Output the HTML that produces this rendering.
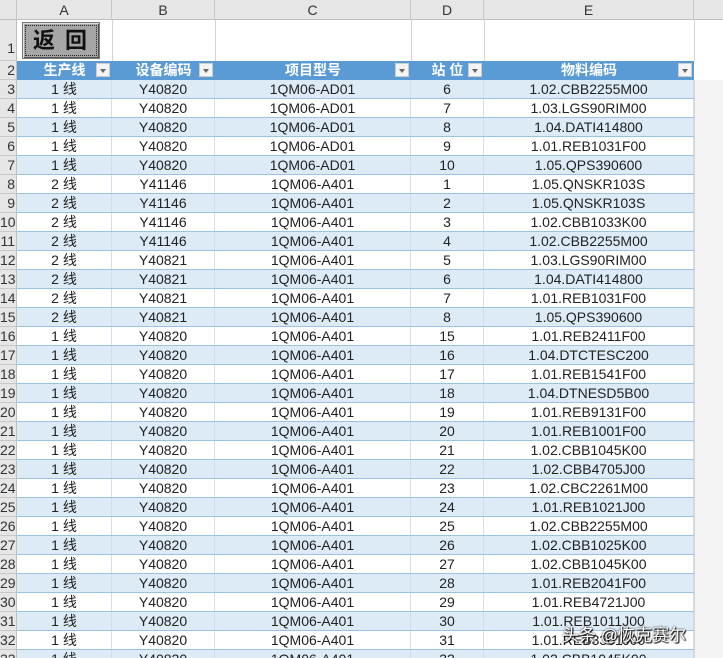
<!DOCTYPE html>
<html><head><meta charset="utf-8"><style>
*{margin:0;padding:0;box-sizing:border-box}
html,body{width:723px;height:658px;overflow:hidden}
body{background:#fff;font-family:"Liberation Sans","Noto Sans CJK SC",sans-serif;position:relative;color:#222}
.ch{position:absolute;top:0;height:20px;background:#e6e6e6;border-right:1px solid #c8c8c8;border-bottom:1px solid #bfbfbf;text-align:center;font-size:14px;line-height:20px;color:#333}
.rh{position:absolute;left:0;width:17px;background:#e6e6e6;border-bottom:1px solid #c8c8c8;border-right:1px solid #bfbfbf;text-align:right;font-size:14px;color:#333;overflow:hidden;white-space:nowrap;padding-right:1px}
.r{position:absolute;left:17px;width:677px;height:19px;display:flex;font-size:14px;line-height:19px;border-bottom:1px solid #9bc2e6}
.r.b{background:#ddebf7}
.r div{text-align:center;border-right:1px solid #d4dde8;white-space:nowrap;overflow:hidden}
.a{width:95px}.bb{width:103px}.c{width:196px}.d{width:73px}.e{width:210px}
.h{position:absolute;left:17px;top:61px;width:677px;height:19px;background:#5b9bd5;display:flex;color:#fff;font-weight:bold;font-size:14px;line-height:19px}
.h div{position:relative;text-align:center}
.dd{position:absolute;right:2px;top:2px;width:14px;height:14px;background:#f4f4f4;border:1px solid #ccc}
.dd:after{content:"";position:absolute;left:3px;top:5px;border-left:3px solid transparent;border-right:3px solid transparent;border-top:4px solid #666}
</style></head><body>
<div class="ch" style="left:0;width:17px"></div>
<div class="ch" style="left:17px;width:95px">A</div>
<div class="ch" style="left:112px;width:103px">B</div>
<div class="ch" style="left:215px;width:196px">C</div>
<div class="ch" style="left:411px;width:73px">D</div>
<div class="ch" style="left:484px;width:210px">E</div>
<div class="ch" style="left:694px;width:29px;border-right:none"></div>
<div style="position:absolute;left:112px;top:20px;width:1px;height:41px;background:#d4d4d4"></div>
<div style="position:absolute;left:215px;top:20px;width:1px;height:41px;background:#d4d4d4"></div>
<div style="position:absolute;left:411px;top:20px;width:1px;height:41px;background:#d4d4d4"></div>
<div style="position:absolute;left:484px;top:20px;width:1px;height:41px;background:#d4d4d4"></div>
<div style="position:absolute;left:694px;top:20px;width:1px;height:41px;background:#d4d4d4"></div>
<div style="position:absolute;left:694px;top:80px;width:29px;height:578px;background:#f4f4f4;border-left:1px solid #d4d4d4"></div>
<div class="rh" style="top:20px;height:41px;line-height:56px">1</div>
<div class="rh" style="top:61px;height:19px;line-height:19px">2</div>
<div style="position:absolute;left:22px;top:22px;width:78px;height:37px;background:#a6a6a6;border:1px solid #777;box-shadow:inset 1px 1px 0 #e0e0e0,inset -1px -1px 0 #555">
<div style="position:absolute;left:2px;top:2px;right:2px;bottom:2px;border:1px dotted #222;font-size:22px;font-weight:bold;text-align:center;line-height:30px;color:#111;white-space:nowrap;letter-spacing:2px">返 回</div></div>
<div class="h"><div class="a">生产线<span class="dd"></span></div><div class="bb">设备编码<span class="dd"></span></div><div class="c">项目型号<span class="dd"></span></div><div class="d">站 位<span class="dd"></span></div><div class="e">物料编码<span class="dd"></span></div></div>

<div class="rh" style="top:80px;height:19px;line-height:19px">3</div><div class="r b" style="top:80px"><div class="a">1 线</div><div class="bb">Y40820</div><div class="c">1QM06-AD01</div><div class="d">6</div><div class="e">1.02.CBB2255M00</div></div>
<div class="rh" style="top:99px;height:19px;line-height:19px">4</div><div class="r" style="top:99px"><div class="a">1 线</div><div class="bb">Y40820</div><div class="c">1QM06-AD01</div><div class="d">7</div><div class="e">1.03.LGS90RIM00</div></div>
<div class="rh" style="top:118px;height:19px;line-height:19px">5</div><div class="r b" style="top:118px"><div class="a">1 线</div><div class="bb">Y40820</div><div class="c">1QM06-AD01</div><div class="d">8</div><div class="e">1.04.DATI414800</div></div>
<div class="rh" style="top:137px;height:19px;line-height:19px">6</div><div class="r" style="top:137px"><div class="a">1 线</div><div class="bb">Y40820</div><div class="c">1QM06-AD01</div><div class="d">9</div><div class="e">1.01.REB1031F00</div></div>
<div class="rh" style="top:156px;height:19px;line-height:19px">7</div><div class="r b" style="top:156px"><div class="a">1 线</div><div class="bb">Y40820</div><div class="c">1QM06-AD01</div><div class="d">10</div><div class="e">1.05.QPS390600</div></div>
<div class="rh" style="top:175px;height:19px;line-height:19px">8</div><div class="r" style="top:175px"><div class="a">2 线</div><div class="bb">Y41146</div><div class="c">1QM06-A401</div><div class="d">1</div><div class="e">1.05.QNSKR103S</div></div>
<div class="rh" style="top:194px;height:19px;line-height:19px">9</div><div class="r b" style="top:194px"><div class="a">2 线</div><div class="bb">Y41146</div><div class="c">1QM06-A401</div><div class="d">2</div><div class="e">1.05.QNSKR103S</div></div>
<div class="rh" style="top:213px;height:19px;line-height:19px">10</div><div class="r" style="top:213px"><div class="a">2 线</div><div class="bb">Y41146</div><div class="c">1QM06-A401</div><div class="d">3</div><div class="e">1.02.CBB1033K00</div></div>
<div class="rh" style="top:232px;height:19px;line-height:19px">11</div><div class="r b" style="top:232px"><div class="a">2 线</div><div class="bb">Y41146</div><div class="c">1QM06-A401</div><div class="d">4</div><div class="e">1.02.CBB2255M00</div></div>
<div class="rh" style="top:251px;height:19px;line-height:19px">12</div><div class="r" style="top:251px"><div class="a">2 线</div><div class="bb">Y40821</div><div class="c">1QM06-A401</div><div class="d">5</div><div class="e">1.03.LGS90RIM00</div></div>
<div class="rh" style="top:270px;height:19px;line-height:19px">13</div><div class="r b" style="top:270px"><div class="a">2 线</div><div class="bb">Y40821</div><div class="c">1QM06-A401</div><div class="d">6</div><div class="e">1.04.DATI414800</div></div>
<div class="rh" style="top:289px;height:19px;line-height:19px">14</div><div class="r" style="top:289px"><div class="a">2 线</div><div class="bb">Y40821</div><div class="c">1QM06-A401</div><div class="d">7</div><div class="e">1.01.REB1031F00</div></div>
<div class="rh" style="top:308px;height:19px;line-height:19px">15</div><div class="r b" style="top:308px"><div class="a">2 线</div><div class="bb">Y40821</div><div class="c">1QM06-A401</div><div class="d">8</div><div class="e">1.05.QPS390600</div></div>
<div class="rh" style="top:327px;height:19px;line-height:19px">16</div><div class="r" style="top:327px"><div class="a">1 线</div><div class="bb">Y40820</div><div class="c">1QM06-A401</div><div class="d">15</div><div class="e">1.01.REB2411F00</div></div>
<div class="rh" style="top:346px;height:19px;line-height:19px">17</div><div class="r b" style="top:346px"><div class="a">1 线</div><div class="bb">Y40820</div><div class="c">1QM06-A401</div><div class="d">16</div><div class="e">1.04.DTCTESC200</div></div>
<div class="rh" style="top:365px;height:19px;line-height:19px">18</div><div class="r" style="top:365px"><div class="a">1 线</div><div class="bb">Y40820</div><div class="c">1QM06-A401</div><div class="d">17</div><div class="e">1.01.REB1541F00</div></div>
<div class="rh" style="top:384px;height:19px;line-height:19px">19</div><div class="r b" style="top:384px"><div class="a">1 线</div><div class="bb">Y40820</div><div class="c">1QM06-A401</div><div class="d">18</div><div class="e">1.04.DTNESD5B00</div></div>
<div class="rh" style="top:403px;height:19px;line-height:19px">20</div><div class="r" style="top:403px"><div class="a">1 线</div><div class="bb">Y40820</div><div class="c">1QM06-A401</div><div class="d">19</div><div class="e">1.01.REB9131F00</div></div>
<div class="rh" style="top:422px;height:19px;line-height:19px">21</div><div class="r b" style="top:422px"><div class="a">1 线</div><div class="bb">Y40820</div><div class="c">1QM06-A401</div><div class="d">20</div><div class="e">1.01.REB1001F00</div></div>
<div class="rh" style="top:441px;height:19px;line-height:19px">22</div><div class="r" style="top:441px"><div class="a">1 线</div><div class="bb">Y40820</div><div class="c">1QM06-A401</div><div class="d">21</div><div class="e">1.02.CBB1045K00</div></div>
<div class="rh" style="top:460px;height:19px;line-height:19px">23</div><div class="r b" style="top:460px"><div class="a">1 线</div><div class="bb">Y40820</div><div class="c">1QM06-A401</div><div class="d">22</div><div class="e">1.02.CBB4705J00</div></div>
<div class="rh" style="top:479px;height:19px;line-height:19px">24</div><div class="r" style="top:479px"><div class="a">1 线</div><div class="bb">Y40820</div><div class="c">1QM06-A401</div><div class="d">23</div><div class="e">1.02.CBC2261M00</div></div>
<div class="rh" style="top:498px;height:19px;line-height:19px">25</div><div class="r b" style="top:498px"><div class="a">1 线</div><div class="bb">Y40820</div><div class="c">1QM06-A401</div><div class="d">24</div><div class="e">1.01.REB1021J00</div></div>
<div class="rh" style="top:517px;height:19px;line-height:19px">26</div><div class="r" style="top:517px"><div class="a">1 线</div><div class="bb">Y40820</div><div class="c">1QM06-A401</div><div class="d">25</div><div class="e">1.02.CBB2255M00</div></div>
<div class="rh" style="top:536px;height:19px;line-height:19px">27</div><div class="r b" style="top:536px"><div class="a">1 线</div><div class="bb">Y40820</div><div class="c">1QM06-A401</div><div class="d">26</div><div class="e">1.02.CBB1025K00</div></div>
<div class="rh" style="top:555px;height:19px;line-height:19px">28</div><div class="r" style="top:555px"><div class="a">1 线</div><div class="bb">Y40820</div><div class="c">1QM06-A401</div><div class="d">27</div><div class="e">1.02.CBB1045K00</div></div>
<div class="rh" style="top:574px;height:19px;line-height:19px">29</div><div class="r b" style="top:574px"><div class="a">1 线</div><div class="bb">Y40820</div><div class="c">1QM06-A401</div><div class="d">28</div><div class="e">1.01.REB2041F00</div></div>
<div class="rh" style="top:593px;height:19px;line-height:19px">30</div><div class="r" style="top:593px"><div class="a">1 线</div><div class="bb">Y40820</div><div class="c">1QM06-A401</div><div class="d">29</div><div class="e">1.01.REB4721J00</div></div>
<div class="rh" style="top:612px;height:19px;line-height:19px">31</div><div class="r b" style="top:612px"><div class="a">1 线</div><div class="bb">Y40820</div><div class="c">1QM06-A401</div><div class="d">30</div><div class="e">1.01.REB1011J00</div></div>
<div class="rh" style="top:631px;height:19px;line-height:19px">32</div><div class="r" style="top:631px"><div class="a">1 线</div><div class="bb">Y40820</div><div class="c">1QM06-A401</div><div class="d">31</div><div class="e">1.01.REB3301J00</div></div>
<div class="rh" style="top:650px;height:19px;line-height:19px">33</div><div class="r b" style="top:650px"><div class="a">1 线</div><div class="bb">Y40820</div><div class="c">1QM06-A401</div><div class="d">32</div><div class="e">1.02.CBB1045K00</div></div>
<div style="position:absolute;left:562px;top:621px;font-size:17px;color:#fff;text-shadow:0 0 2px #000,1px 1px 1px #000;white-space:nowrap">头条 @恢克赛尔</div>
</body></html>
